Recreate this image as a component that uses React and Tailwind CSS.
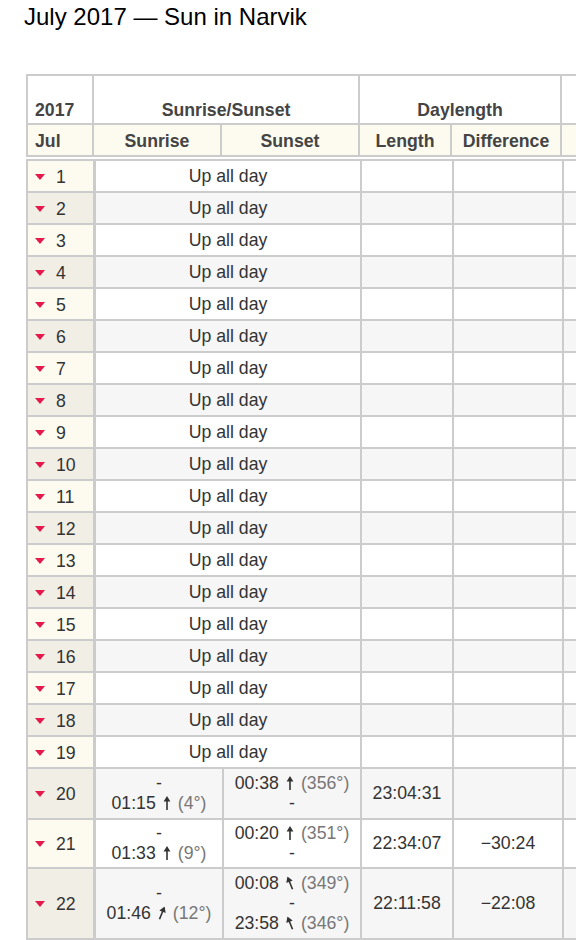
const upDays = Array.from({ length: 19 }, (_, i) => i + 1);

const Arrow = ({ angle = 0 }) => (
  <svg
    width="10"
    height="14"
    viewBox="0 0 10 14"
    className="mx-[6px] inline-block align-[-1px]"
    style={{ transform: `rotate(${angle}deg)` }}
  >
    <path d="M5 0 L8.4 5.6 H5.8 V14 H4.2 V5.6 H1.6 Z" fill="#333" />
  </svg>
);

const Time = ({ time, angle, deg }) => (
  <div className="whitespace-nowrap">
    <span>{time}</span>
    <Arrow angle={angle} />
    <span className="text-[#777]">({deg}°)</span>
  </div>
);

const DayCell = ({ day, h }) => {
  const even = day % 2 === 0;
  return (
    <td
      className={`${h} border-r-[3px] border-b-2 border-[#ccc] pl-[7px] pt-[2px] align-middle ${
        even ? 'bg-[#f1eee6]' : 'bg-[#fdfbf0]'
      }`}
    >
      <div className="flex items-center gap-[11px]">
        <span className="h-0 w-0 border-x-[5.5px] border-t-[6px] border-x-transparent border-t-[#e5194b]" />
        <span>{day}</span>
      </div>
    </td>
  );
};

const App = () => {
  const cell = 'border-r-2 border-b-2 border-[#ccc]';

  return (
    <div className="h-[940px] w-[576px] overflow-hidden bg-white font-['Liberation_Sans',Arial,sans-serif] text-[17.7px] leading-[20px] text-[#333]">
      <h1 className="pl-[24px] pt-[3px] text-[24px] leading-[1.2] font-normal text-black">
        July 2017 — Sun in Narvik
      </h1>

      <div className="ml-[26px] mt-[42px] w-[640px]">
        {/* fixed header */}
        <table className="w-[636px] table-fixed border-separate border-spacing-0 border-l-2 border-t-2 border-[#ccc]">
          <colgroup>
            <col className="w-[66px]" />
            <col className="w-[128px]" />
            <col className="w-[138px]" />
            <col className="w-[92px]" />
            <col className="w-[110px]" />
            <col className="w-[100px]" />
          </colgroup>
          <thead className="font-bold text-[#444]">
            <tr>
              <th className={`${cell} h-[49px] pb-[3px] pl-[7px] text-left align-bottom`}>2017</th>
              <th colSpan={2} className={`${cell} h-[49px] pb-[3px] text-center align-bottom`}>
                Sunrise/Sunset
              </th>
              <th colSpan={2} className={`${cell} h-[49px] pb-[3px] text-center align-bottom`}>
                Daylength
              </th>
              <th className={`${cell} h-[49px]`} />
            </tr>
            <tr className="bg-[#fdfbf0]">
              <th className={`${cell} h-[32px] pl-[7px] pt-[2px] text-left align-middle`}>Jul</th>
              <th className={`${cell} h-[32px] pt-[2px] text-center align-middle`}>Sunrise</th>
              <th className={`${cell} h-[32px] pt-[2px] text-center align-middle`}>Sunset</th>
              <th className={`${cell} h-[32px] pt-[2px] text-center align-middle`}>Length</th>
              <th className={`${cell} h-[32px] pt-[2px] text-center align-middle`}>Difference</th>
              <th className={`${cell} h-[32px]`} />
            </tr>
          </thead>
        </table>

        <div className="h-[2px]" />

        <table className="w-[638px] table-fixed border-separate border-spacing-0 border-l-2 border-t-2 border-[#ccc]">
          <colgroup>
            <col className="w-[68px]" />
            <col className="w-[128px]" />
            <col className="w-[138px]" />
            <col className="w-[92px]" />
            <col className="w-[110px]" />
            <col className="w-[100px]" />
          </colgroup>
          <tbody>
            {upDays.map((day) => (
              <tr key={day} className={day % 2 === 0 ? 'bg-[#f6f6f6]' : 'bg-white'}>
                <DayCell day={day} h="h-[32px]" />
                <td colSpan={2} className={`${cell} h-[32px] text-center align-middle`}>
                  Up all day
                </td>
                <td className={`${cell} h-[32px]`} />
                <td className={`${cell} h-[32px]`} />
                <td className={`${cell} h-[32px]`} />
              </tr>
            ))}

            <tr className="bg-[#f6f6f6]">
              <DayCell day={20} h="h-[51px]" />
              <td className={`${cell} h-[51px] text-center align-middle`}>
                <div>-</div>
                <Time time="01:15" angle={0} deg={4} />
              </td>
              <td className={`${cell} h-[51px] text-center align-middle`}>
                <Time time="00:38" angle={0} deg={356} />
                <div>-</div>
              </td>
              <td className={`${cell} h-[51px] text-center align-middle`}>23:04:31</td>
              <td className={`${cell} h-[51px]`} />
              <td className={`${cell} h-[51px]`} />
            </tr>

            <tr className="bg-white">
              <DayCell day={21} h="h-[49px]" />
              <td className={`${cell} h-[49px] text-center align-middle`}>
                <div>-</div>
                <Time time="01:33" angle={0} deg={9} />
              </td>
              <td className={`${cell} h-[49px] text-center align-middle`}>
                <Time time="00:20" angle={0} deg={351} />
                <div>-</div>
              </td>
              <td className={`${cell} h-[49px] text-center align-middle`}>22:34:07</td>
              <td className={`${cell} h-[49px] text-center align-middle`}>−30:24</td>
              <td className={`${cell} h-[49px]`} />
            </tr>

            <tr className="bg-[#f6f6f6]">
              <DayCell day={22} h="h-[71px]" />
              <td className={`${cell} h-[71px] text-center align-middle`}>
                <div>-</div>
                <Time time="01:46" angle={22} deg={12} />
              </td>
              <td className={`${cell} h-[71px] text-center align-middle`}>
                <Time time="00:08" angle={-22} deg={349} />
                <div>-</div>
                <Time time="23:58" angle={-22} deg={346} />
              </td>
              <td className={`${cell} h-[71px] text-center align-middle`}>22:11:58</td>
              <td className={`${cell} h-[71px] text-center align-middle`}>−22:08</td>
              <td className={`${cell} h-[71px]`} />
            </tr>
          </tbody>
        </table>
      </div>
    </div>
  );
};

export default App;
